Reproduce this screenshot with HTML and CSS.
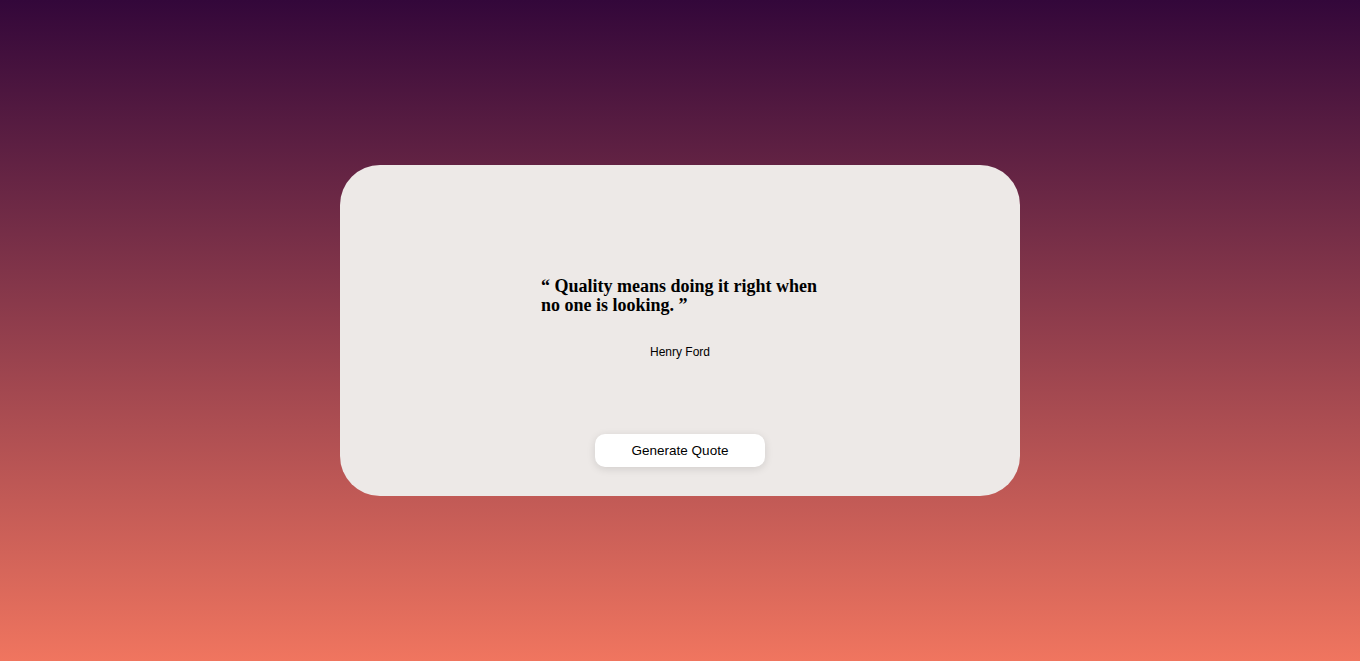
FILE: index.html
```html
<!DOCTYPE html>
<html>
<head>
<meta charset="utf-8">
<link rel="stylesheet" href="styles.css">
</head>
<body>
<main class="page">
  <section class="card">
    <div class="content">
      <p class="quote">“ Quality means doing it right when no one is looking. ”</p>
      <p class="author">Henry Ford</p>
    </div>
    <button class="btn">Generate Quote</button>
  </section>
</main>
</body>
</html>
```
FILE: styles.css
```css
html, body {
  margin: 0;
  padding: 0;
  height: 100%;
}
body {
  background: linear-gradient(to bottom, #33073a 0%, #f0755f 100%);
  font-family: "Liberation Sans", Arial, sans-serif;
}
.page {
  height: 661px;
  display: flex;
  align-items: center;
  justify-content: center;
}
.card {
  width: 680px;
  height: 331px;
  box-sizing: border-box;
  background: #ede9e7;
  border-radius: 40px;
  display: flex;
  flex-direction: column;
  align-items: center;
  padding: 112px 0 29px;
}
.content {
  flex: 1;
  display: flex;
  flex-direction: column;
  align-items: center;
}
.quote {
  margin: 0 0 0 2px;
  width: 280px;
  font-family: "Liberation Serif", "Times New Roman", serif;
  font-weight: bold;
  font-size: 18px;
  line-height: 19px;
  color: #000;
  text-align: left;
}
.author {
  margin: 30px 0 0;
  font-size: 12px;
  color: #000;
}
.btn {
  width: 170px;
  height: 33px;
  border: none;
  border-radius: 10px;
  background: #fff;
  box-shadow: 0 2px 8px rgba(0,0,0,0.12);
  font-family: "Liberation Sans", Arial, sans-serif;
  font-size: 13.5px;
  color: #000;
  padding: 0;
}
```
